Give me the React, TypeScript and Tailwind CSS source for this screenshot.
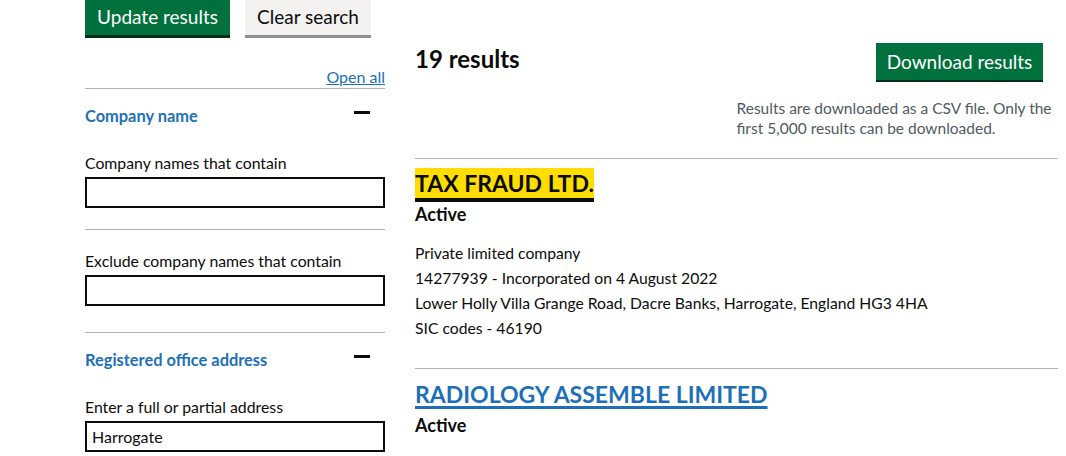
import React from "react";

function Minus() {
  return <span className="mt-[7px] mr-[15px] h-[3px] w-4 bg-[#0b0c0c]" />;
}

function TextInput({ value = "" }: { value?: string }) {
  return (
    <input
      className="mt-[2px] block h-[31px] w-full border-2 border-[#0b0c0c] px-[5px] text-[16px] text-[#0b0c0c] outline-none"
      defaultValue={value}
    />
  );
}

export default function App() {
  return (
    <div className="flex min-h-screen gap-[30px] bg-white pl-[85px] pr-2 font-['Lato',sans-serif] text-[#0b0c0c]">
      {/* filters */}
      <div className="w-[300px] shrink-0">
        <div className="flex gap-[15px]">
          <button className="h-[35px] w-[145px] bg-[#00703c] text-[19px] text-white shadow-[0_3px_0_#002d18]">
            Update results
          </button>
          <button className="h-[35px] w-[126px] bg-[#f3f2f1] text-[19px] text-[#0b0c0c] shadow-[0_3px_0_#929191]">
            Clear search
          </button>
        </div>

        <div className="mt-[3px] flex h-[51px] items-end justify-end border-b border-[#b1b4b6]">
          <a href="#" className="pb-[1px] text-[16px] leading-5 text-[#1d70b8] underline">
            Open all
          </a>
        </div>

        <div className="border-b border-[#b1b4b6] pb-[21px]">
          <div className="mt-[15px] flex h-6 items-start justify-between">
            <span className="text-[16.4px] font-bold leading-6 text-[#1d70b8]">Company name</span>
            <Minus />
          </div>
          <label className="mt-[23px] block text-[15.8px] leading-6">Company names that contain</label>
          <TextInput />
        </div>

        <div className="border-b border-[#b1b4b6] pb-[26px]">
          <label className="mt-[19px] block text-[15.8px] leading-6">Exclude company names that contain</label>
          <TextInput />
        </div>

        <div>
          <div className="mt-[15px] flex h-6 items-start justify-between">
            <span className="text-[16.4px] font-bold leading-6 text-[#1d70b8]">Registered office address</span>
            <Minus />
          </div>
          <label className="mt-[23px] block text-[15.8px] leading-6">Enter a full or partial address</label>
          <TextInput value="Harrogate" />
        </div>
      </div>

      {/* results */}
      <div className="flex-1">
        <div className="grid grid-cols-2">
          <h2 className="pt-[44px] text-[24px] font-bold leading-[30px]">19 results</h2>
          <div className="pt-[43px]">
            <div className="flex justify-end pr-[15px]">
              <button className="h-[37px] w-[167px] bg-[#00703c] pt-[2px] text-[19px] text-white shadow-[0_2px_0_#002d18]">
                Download results
              </button>
            </div>
            <p className="mt-[18px] text-[15.5px] leading-5 text-[#505a5f]">
              Results are downloaded as a CSV file. Only the first 5,000 results can be downloaded.
            </p>
          </div>
        </div>

        <div className="mt-[20px] border-t border-[#b1b4b6] pt-[9px] pb-[27px]">
          <a
            href="#"
            className="inline-block h-[30px] bg-[#ffdd00] text-[23px] font-bold leading-[30px] text-[#0b0c0c] shadow-[0_4px_0_#0b0c0c]"
          >
            TAX FRAUD LTD.
          </a>
          <p className="mt-[4px] text-[18px] font-bold leading-6">Active</p>
          <ul className="mt-[15px] text-[15.7px] leading-[25px]">
            <li>Private limited company</li>
            <li>14277939 - Incorporated on 4 August 2022</li>
            <li>Lower Holly Villa Grange Road, Dacre Banks, Harrogate, England HG3 4HA</li>
            <li>SIC codes - 46190</li>
          </ul>
        </div>

        <div className="border-t border-[#b1b4b6] pt-[10px]">
          <a
            href="#"
            className="inline-block text-[23px] font-bold leading-[30px] text-[#1d70b8] underline decoration-[3px] underline-offset-[3px]"
          >
            RADIOLOGY ASSEMBLE LIMITED
          </a>
          <p className="mt-[4px] text-[18px] font-bold leading-6">Active</p>
        </div>
      </div>
    </div>
  );
}
